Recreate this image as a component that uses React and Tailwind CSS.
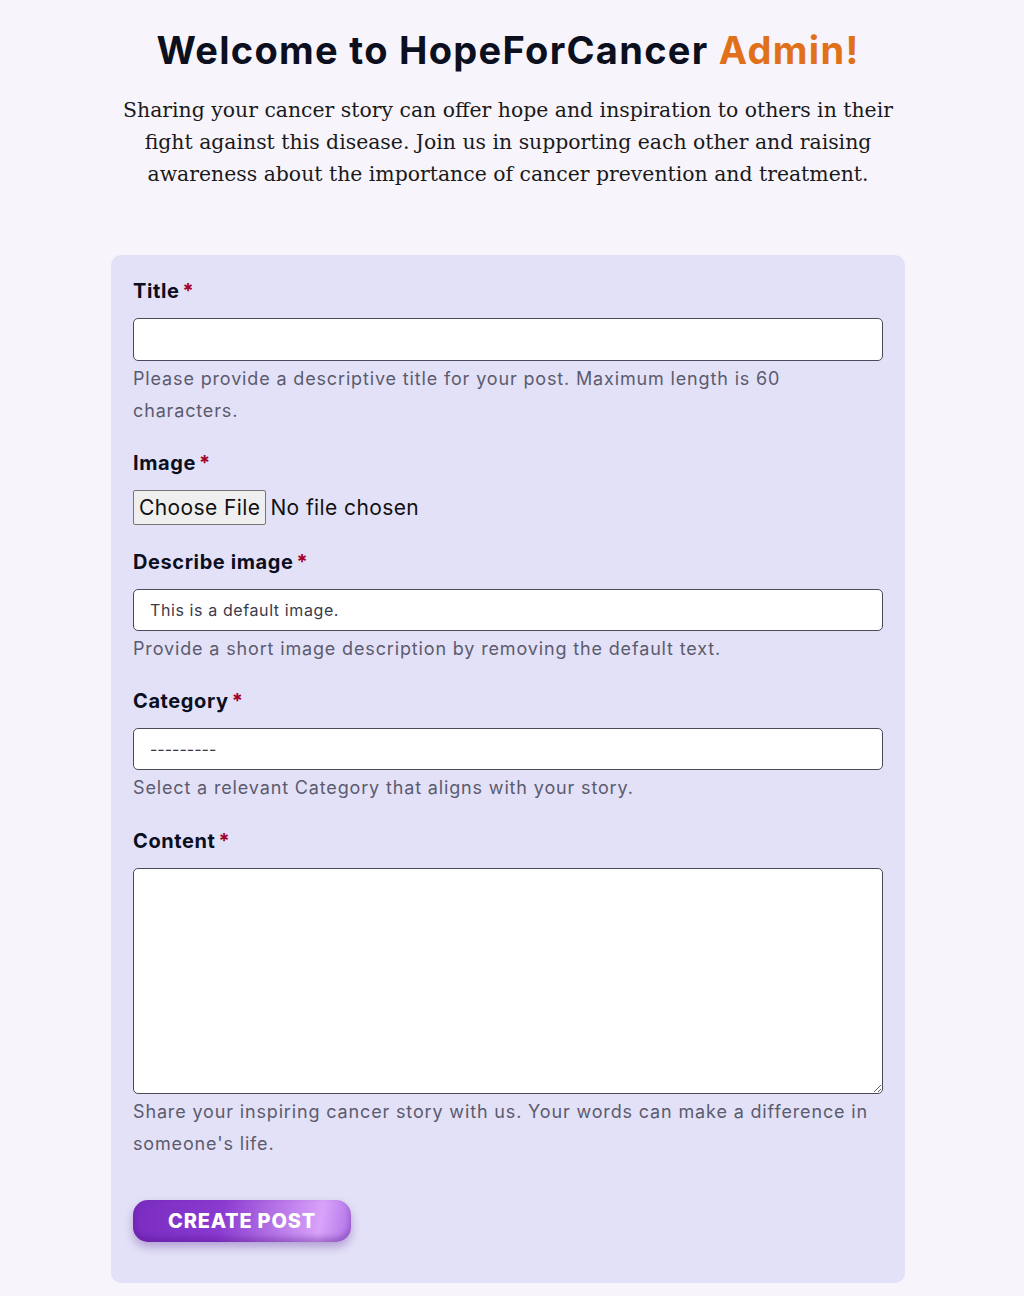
import React from "react";

const sans = { fontFamily: "Inter, 'Noto Sans', sans-serif" };

function Label({ children }) {
  return (
    <div className="text-[20px] leading-[28px] font-bold text-[#0b0f1e] mb-[13px] tracking-[0.6px]">
      {children}
      <span className="text-[#a3002a] ml-[3px]">*</span>
    </div>
  );
}

function Help({ children }) {
  return (
    <p className="mt-[2px] text-[18px] leading-[32px] text-[#5b5b6e] tracking-[0.85px]">{children}</p>
  );
}

export default function App() {
  return (
    <div className="min-h-[1296px] bg-[#f8f4fb] flex flex-col items-center pr-[8px]" style={sans}>
      <h1 className="mt-[26px] text-[38px] leading-[48px] font-bold text-[#0b0f1e] tracking-[1.3px]">
        Welcome to HopeForCancer <span className="text-[#e0701a]">Admin!</span>
      </h1>
      <p
        className="mt-[20px] w-[800px] text-center text-[20.4px] leading-[32px] text-[#1a1a1a]"
        style={{ fontFamily: "'DejaVu Serif', serif" }}
      >
        Sharing your cancer story can offer hope and inspiration to others in their
        <br />
        fight against this disease. Join us in supporting each other and raising
        <br />
        awareness about the importance of cancer prevention and treatment.
      </p>

      <form className="mt-[65px] w-[794px] bg-[#e3e1f7] rounded-[10px] px-[22px] pt-[22px] pb-[41px] flex flex-col">
        <Label>Title</Label>
        <input
          type="text"
          className="h-[43px] w-full bg-white border border-[#4a4a5a] rounded-[5px] px-[16px] text-[16px]"
        />
        <Help>
          Please provide a descriptive title for your post. Maximum length is 60
          <br />
          characters.
        </Help>

        <div className="mt-[22px]">
          <Label>Image</Label>
          <div className="flex items-center h-[35px]">
            <span className="h-[35px] px-[5px] flex items-center bg-[#efefef] border border-[#767676] text-[21px] text-[#111] rounded-[2px] tracking-[0.4px]">
              Choose File
            </span>
            <span className="ml-[4px] text-[21px] text-[#111] tracking-[0.4px]">No file chosen</span>
          </div>
        </div>

        <div className="mt-[23px]">
          <Label>Describe image</Label>
          <input
            type="text"
            defaultValue="This is a default image."
            className="h-[42px] w-full bg-white border border-[#4a4a5a] rounded-[5px] px-[16px] text-[16px] text-[#3a3a4a] tracking-[0.6px]"
          />
          <Help>Provide a short image description by removing the default text.</Help>
        </div>

        <div className="mt-[22px]">
          <Label>Category</Label>
          <div className="h-[42px] w-full bg-white border border-[#4a4a5a] rounded-[5px] px-[16px] text-[16px] text-[#3a3a4a] flex items-center">
            ---------
          </div>
          <Help>Select a relevant Category that aligns with your story.</Help>
        </div>

        <div className="mt-[23px]">
          <Label>Content</Label>
          <textarea className="block h-[226px] w-full bg-white border border-[#4a4a5a] rounded-[5px] px-[16px] py-[10px] text-[16px]" />
          <Help>
            Share your inspiring cancer story with us. Your words can make a difference in
            <br />
            someone's life.
          </Help>
        </div>

        <div className="mt-[40px]">
          <button
            type="button"
            className="h-[42px] w-[218px] rounded-[15px] text-white text-[20px] font-extrabold uppercase tracking-[0.8px] bg-[linear-gradient(100deg,#7a2cc0_0%,#8a3ad0_40%,#d9a3fa_85%,#b071e6_100%)] shadow-[0_5px_10px_rgba(90,40,150,0.35),inset_0_-4px_6px_rgba(70,10,120,0.35)]"
          >
            Create Post
          </button>
        </div>
      </form>
    </div>
  );
}
